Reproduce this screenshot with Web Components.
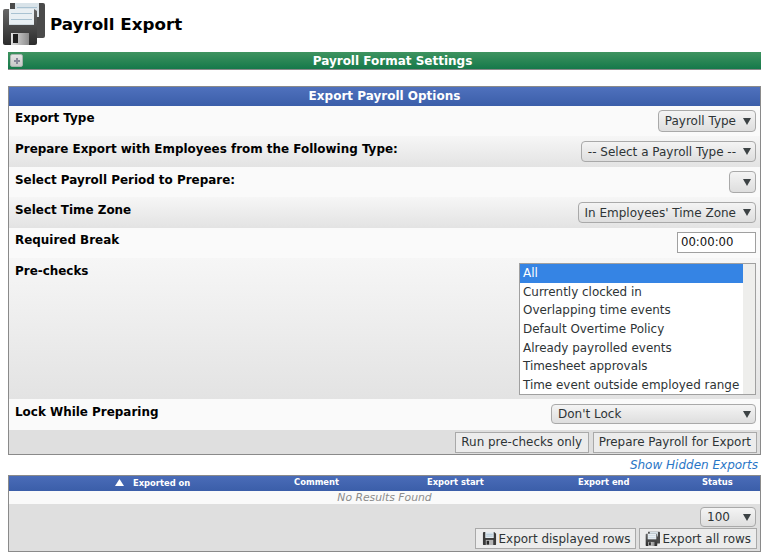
<!DOCTYPE html>
<html><head><meta charset="utf-8"><style>
html,body{margin:0;padding:0;background:#fff;font:12px "DejaVu Sans",sans-serif;color:#000}
body{width:763px;height:556px;overflow:hidden}
</style></head><body>
<page-head title-text="Payroll Export"></page-head>
<collapse-bar>Payroll Format Settings</collapse-bar>
<panel-box heading="Export Payroll Options">
  <form-row label="Export Type" h="30" lt="1"><drop-select>Payroll Type</drop-select></form-row>
  <form-row shade label="Prepare Export with Employees from the Following Type:" h="31" lt="2"><drop-select style="margin-top:1px;height:21px">-- Select a Payroll Type --</drop-select></form-row>
  <form-row label="Select Payroll Period to Prepare:" h="30" lt="2"><drop-select style="width:27px"></drop-select></form-row>
  <form-row shade label="Select Time Zone" h="31" lt="2"><drop-select style="margin-top:1px;height:21px">In Employees' Time Zone</drop-select></form-row>
  <form-row label="Required Break" h="30" lt="1"><time-input>00:00:00</time-input></form-row>
  <form-row shade label="Pre-checks" h="141" lt="2"><list-box><b>All</b><span>Currently clocked in</span><span>Overlapping time events</span><span>Default Overtime Policy</span><span>Already payrolled events</span><span>Timesheet approvals</span><span>Time event outside employed range</span></list-box></form-row>
  <form-row label="Lock While Preparing" h="31" lt="2"><drop-select style="width:205px;height:20px;margin-top:1px">Don't Lock</drop-select></form-row>
  <foot-bar><push-btn style="padding:0 5.5px">Run pre-checks only</push-btn><push-btn>Prepare Payroll for Export</push-btn></foot-bar>
</panel-box>
<hidden-link>Show Hidden Exports</hidden-link>
<result-table></result-table>
<script>
let gid=0;
const FLOPPY=(w,h)=>`<svg width="${w}" height="${h}" viewBox="0 0 16 16" style="flex:none"><path d="M1 2q0-1 1-1h11l2 2v11q0 1-1 1H2q-1 0-1-1z" fill="#3a3a3a"/><rect x="3.5" y="1" width="9" height="6.5" fill="#e4ebf0"/><rect x="4.5" y="3" width="7" height=".8" fill="#9bb7c9"/><rect x="4.5" y="5" width="7" height=".8" fill="#9bb7c9"/><rect x="4" y="9.5" width="8" height="5.5" fill="#b5b5b5"/><rect x="5" y="10.5" width="2.5" height="4" fill="#2a2a2a"/></svg>`;
const FLOPPY2=(w,h)=>{const id='fd'+(++gid);return `<svg width="${w}" height="${h}" viewBox="0 0 44 44" style="flex:none">
<defs><linearGradient id="${id}" x1="0" y1="0" x2="0" y2="1"><stop offset="0" stop-color="#666"/><stop offset="1" stop-color="#2c2c2c"/></linearGradient>
<linearGradient id="${id}s" x1="0" y1="0" x2="1" y2="0"><stop offset="0" stop-color="#e2e2e2"/><stop offset="1" stop-color="#8c8c8c"/></linearGradient></defs>
<path d="M9 2h33q2 0 2 2v31q0 2-2 2H9z" fill="#4a4a4a"/><rect x="14" y="2" width="24" height="14" fill="#d9e3e9"/><rect x="16" y="6" width="20" height="1" fill="#a9c2d2"/>
<path d="M4 8h29l3 2v32q0 2-2 2H4q-2 0-2-2V10q0-2 2-2z" fill="url(#${id})"/>
<rect x="8" y="8" width="25" height="16" fill="#e9eff3"/><rect x="10" y="12" width="21" height="1" fill="#a9c2d2"/><rect x="10" y="18" width="21" height="1" fill="#a9c2d2"/><rect x="8" y="23" width="25" height="1" fill="#cfd9df"/>
<rect x="10" y="32" width="18" height="12" fill="url(#${id}s)"/><rect x="12" y="33" width="5" height="9" fill="#1f1f1f"/></svg>`};
function def(name,css,html){
  customElements.define(name,class extends HTMLElement{
    connectedCallback(){
      if(this.shadowRoot)return;
      const r=this.attachShadow({mode:'open'});
      r.innerHTML=`<style>${css}</style>`+(typeof html==='function'?html(this):html);
    }
  });
}
def('page-head',`:host{display:flex;align-items:center;gap:5px;height:44px;padding:1px 0 0 1px;margin-bottom:7px;box-sizing:content-box}
h1{margin:0;font:bold 16.7px "DejaVu Sans",sans-serif;position:relative;top:1px}`,
  e=>`${FLOPPY2(44,44)}<h1>${e.getAttribute('title-text')}</h1>`);
def('collapse-bar',`:host{display:flex;align-items:center;justify-content:center;position:relative;height:17px;margin:0 2px 16px 8px;padding-left:16px;box-sizing:content-box;background:linear-gradient(#3f9360,#15794a);border-bottom:1px solid #8a8a8a;color:#fff;font:bold 12px "DejaVu Sans",sans-serif}
i{position:absolute;left:2px;top:2px;width:11px;height:11px;border-radius:2px;background:linear-gradient(#e4e4e4,#c8c8c8);border:1px solid #a8b4ae}
i:after{content:"";position:absolute;left:2.5px;top:4.5px;width:6px;height:2px;background:#889}
i:before{content:"";position:absolute;left:4.5px;top:2.5px;width:2px;height:6px;background:#889}`,`<i></i><slot></slot>`);
def('panel-box',`:host{display:block;border:1px solid #8a8a8a;margin:0 2px 0 8px}
header{height:19px;background:linear-gradient(#4f71bd,#3b5ea9);color:#fff;font:bold 12px/19px "DejaVu Sans",sans-serif;text-align:center}`,
  e=>`<header>${e.getAttribute('heading')}</header><slot></slot>`);
def('form-row',`:host{display:flex;justify-content:space-between;align-items:flex-start;box-sizing:border-box;padding:4px 4px 0 6px;background:#fafafa}
:host([shade]){background:linear-gradient(#f6f6f6,#e3e3e3)}
.l{font:bold 11.94px/15px "DejaVu Sans",sans-serif}`,
  e=>{e.style.height=e.getAttribute('h')+'px';return `<div class="l" style="margin-top:${e.getAttribute('lt')}px">${e.getAttribute('label')}</div><slot></slot>`});
def('drop-select',`:host{display:flex;align-items:center;justify-content:space-between;gap:7px;box-sizing:border-box;height:22px;padding:0 4px 0 6px;border:1px solid #a9a9a9;border-radius:4px;background:linear-gradient(#f4f4f4,#dedede);font:12px "DejaVu Sans",sans-serif;color:#2e3436;margin-left:auto}
svg{flex:none}`,`<span><slot></slot></span><svg width="8" height="7" viewBox="0 0 8 7"><path d="M0 0h8L4 7z" fill="#3c4244"/></svg>`);
def('time-input',`:host{display:block;box-sizing:border-box;width:79px;height:21px;border:1px solid #a0a0a0;background:#fff;font:11.7px/19px "DejaVu Sans",sans-serif;padding-left:3px;color:#111}`,`<slot></slot>`);
def('list-box',`:host{display:flex;flex-direction:column;box-sizing:border-box;width:237px;height:132px;border:1px solid #a0a0a0;padding-top:.3px;background:#fff;margin-top:1px;position:relative;font:11.95px/18.6px "DejaVu Sans",sans-serif;color:#2e3436}
.sb{position:absolute;right:0;top:0;bottom:0;width:12px;background:#eeeeec}
::slotted(*){display:block;height:18.6px;padding-left:3px;margin-right:12px;font-weight:normal;white-space:nowrap}
::slotted(b){background:#3584e4;color:#fff}`,`<slot></slot><div class="sb"></div>`);
def('foot-bar',`:host{display:flex;justify-content:flex-end;gap:4px;align-items:center;height:24px;background:#dfdfdf;padding-right:3px}`,`<slot></slot>`);
def('push-btn',`:host{display:inline-flex;align-items:center;gap:2px;box-sizing:border-box;height:21px;padding:0 5px;border:1px solid #a9a9a9;background:#ececec;font:11.95px "DejaVu Sans",sans-serif;color:#2e3436;white-space:nowrap}`,`<slot></slot>`);
def('hidden-link',`:host{display:block;text-align:right;height:20px;margin-right:5px;font:italic 12px/20px "DejaVu Sans",sans-serif;color:#2a76c6}`,`<slot></slot>`);
def('result-table',`:host{display:block;border:1px solid #8a8a8a;margin:0 2px 0 8px;font-family:"DejaVu Sans",sans-serif}
.h{height:15px;background:linear-gradient(#4a6cb8,#3b5ea9);color:#fff;font:bold 8.4px/15px "DejaVu Sans",sans-serif;position:relative}
.h span{position:absolute;top:-1px}
.h svg{position:absolute;left:106px;top:3px}
.r{height:13px;background:#fafafa;text-align:center;font:italic 10.8px/13px "DejaVu Sans",sans-serif;color:#8c8c8c}
.f{height:47px;background:#dfdfdf;display:flex;flex-direction:column;align-items:flex-end;gap:0;padding:3px 3px 0 0;box-sizing:border-box}
.s{width:56px;height:20px;margin-right:1px}
.b{display:flex;gap:3px;margin-top:1px}`,
`<div class="h"><svg width="9" height="7" viewBox="0 0 9 7"><path d="M4.5 0L9 7H0z" fill="#fff"/></svg><span style="left:124px;top:0">Exported on</span><span style="left:285px">Comment</span><span style="left:418px">Export start</span><span style="left:569px">Export end</span><span style="left:693px">Status</span></div>
<div class="r">No Results Found</div>
<div class="f"><drop-select class="s">100</drop-select><div class="b"><push-btn style="padding-left:6px">${FLOPPY(15,15)}Export displayed rows</push-btn><push-btn>${FLOPPY2(15,15)}Export all rows</push-btn></div></div>`);
</script>
</body></html>
